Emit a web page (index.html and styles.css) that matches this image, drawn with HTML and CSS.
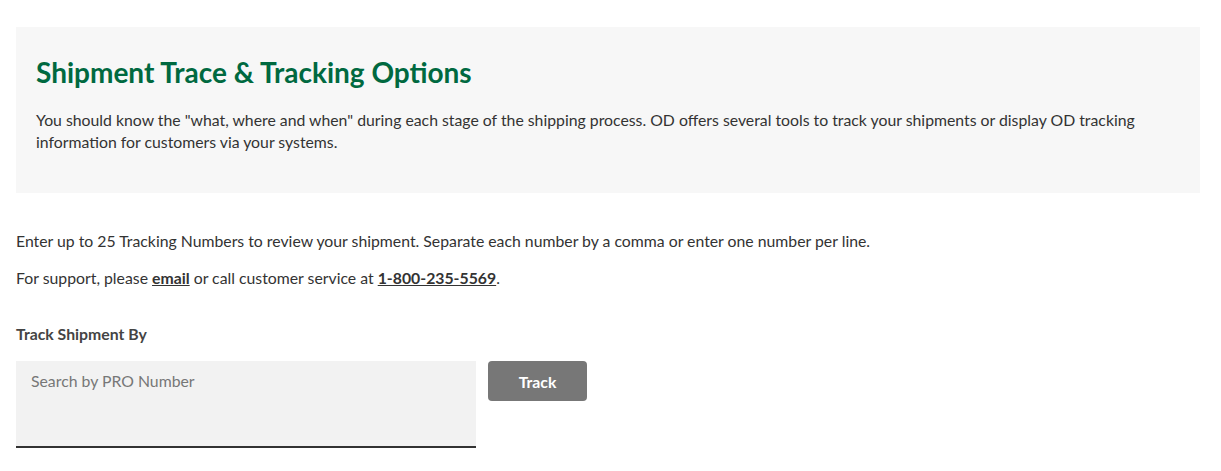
FILE: index.html
```html
<!DOCTYPE html>
<html lang="en">
<head>
<meta charset="utf-8">
<title>Shipment Trace &amp; Tracking Options</title>
<link rel="stylesheet" href="styles.css">
</head>
<body>
<div class="page">
  <section class="intro">
    <h1 class="intro-title">Shipment Trace &amp; Tracking Options</h1>
    <p class="intro-text">You should know the "what, where and when" during each stage of the shipping process. OD offers several tools to track your shipments or display OD tracking information for customers via your systems.</p>
  </section>
  <p class="info">Enter up to 25 Tracking Numbers to review your shipment. Separate each number by a comma or enter one number per line.</p>
  <p class="info">For support, please <a href="#" class="link">email</a> or call customer service at <a href="#" class="link">1-800-235-5569</a>.</p>
  <h2 class="track-label">Track Shipment By</h2>
  <div class="track-row">
    <textarea class="track-input" placeholder="Search by PRO Number"></textarea>
    <button class="track-btn" type="button">Track</button>
  </div>
</div>
</body>
</html>
```
FILE: styles.css
```css
html, body {
  margin: 0;
  padding: 0;
  background: #fff;
}
body {
  font-family: Lato, "Open Sans", Arial, sans-serif;
  color: #333;
  font-size: 15.8px;
  line-height: 22px;
}
.page {
  padding: 27px 21px 0 16px;
}
.intro {
  background: #f7f7f7;
  padding: 26px 20px 40px 20px;
}
.intro-title {
  margin: 0 0 18px 0;
  font-size: 28px;
  line-height: 38px;
  font-weight: 700;
  color: #006940;
}
.intro-text {
  margin: 0;
}
.info {
  margin: 0;
}
.intro + .info {
  margin-top: 37px;
}
.info + .info {
  margin-top: 15px;
}
.link {
  color: #333;
  font-weight: 700;
  text-decoration: underline;
}
.track-label {
  margin: 34px 0 16px 0;
  font-size: 15.8px;
  line-height: 22px;
  font-weight: 700;
  color: #444;
}
.track-row {
  display: flex;
  align-items: flex-start;
  gap: 12px;
}
.track-input {
  width: 460px;
  height: 87px;
  box-sizing: border-box;
  border: none;
  border-bottom: 2px solid #333;
  background: #f2f2f2;
  padding: 9px 15px;
  font-family: Lato, "Open Sans", Arial, sans-serif;
  font-size: 15.8px;
  line-height: 22px;
  color: #333;
  resize: none;
  margin: 0;
  display: block;
}
.track-input::placeholder {
  color: #777;
}
.track-btn {
  width: 99px;
  height: 40px;
  border: none;
  border-radius: 4px;
  background: #777;
  color: #fff;
  font-family: Lato, "Open Sans", Arial, sans-serif;
  font-size: 15.8px;
  font-weight: 700;
  padding: 0;
}
```
